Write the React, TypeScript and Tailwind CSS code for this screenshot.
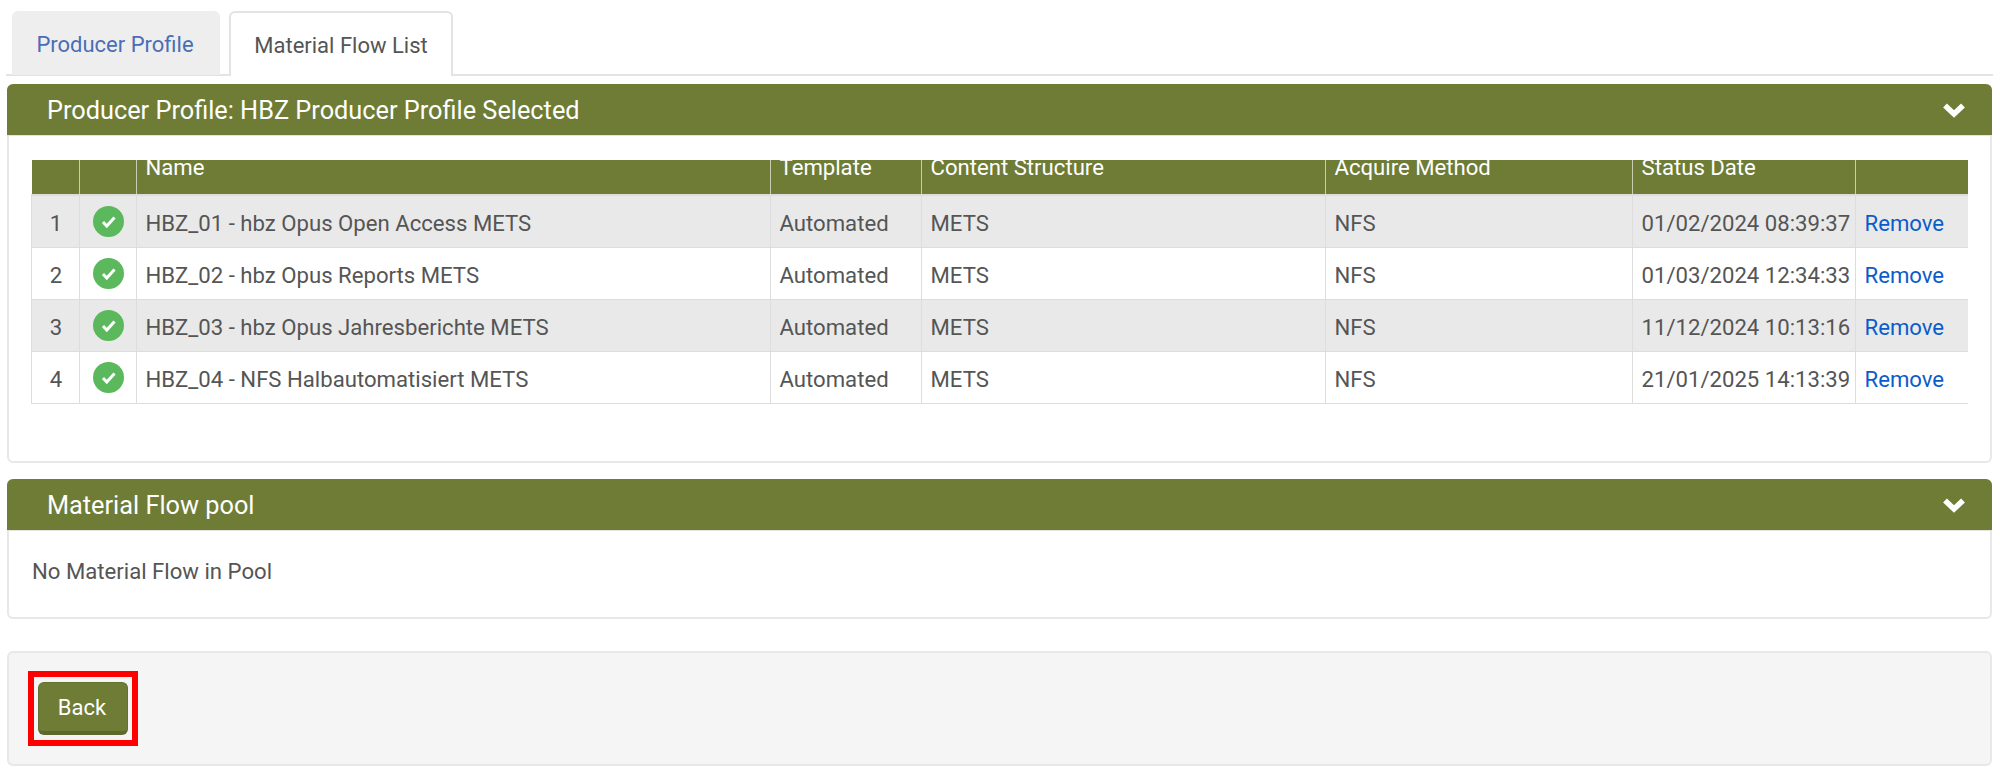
import React from "react";

const rows = [
  ["1", "HBZ_01 - hbz Opus Open Access METS", "01/02/2024 08:39:37"],
  ["2", "HBZ_02 - hbz Opus Reports METS", "01/03/2024 12:34:33"],
  ["3", "HBZ_03 - hbz Opus Jahresberichte METS", "11/12/2024 10:13:16"],
  ["4", "HBZ_04 - NFS Halbautomatisiert METS", "21/01/2025 14:13:39"],
];

const heads = ["", "", "Name", "Template", "Content Structure", "Acquire Method", "Status Date", ""];

function Chevron() {
  return (
    <svg width="24" height="17" viewBox="0 0 24 17" className="block">
      <path d="M3 4.5 L12 13 L21 4.5" fill="none" stroke="#ffffff" strokeWidth="5.5" strokeLinejoin="miter" />
    </svg>
  );
}

function Check() {
  return (
    <svg width="31" height="31" viewBox="0 0 31 31" className="block mx-auto">
      <circle cx="15.5" cy="15.5" r="15.5" fill="#5cb85c" />
      <path d="M10 16 L13.8 20 L21.5 11.5" fill="none" stroke="#ffffff" strokeWidth="3" />
    </svg>
  );
}

function PanelHeader({ title }: { title: string }) {
  return (
    <div className="h-[52px] bg-[#6e7c35] rounded-t-[6px] flex items-center justify-between pl-[40px] pr-[26px] text-white text-[25.3px] border-b border-[#e3e3e3]">
      <span className="pt-[3px]">{title}</span>
      <Chevron />
    </div>
  );
}

export default function App() {
  return (
    <div className="w-[2000px] h-[775px] bg-white text-[#555555] text-[22.15px] overflow-hidden font-['Roboto',sans-serif] px-[6px] pt-[11px]">
      <div className="flex h-[65px] border-b-2 border-[#e3e3e3] w-[1987px] pl-[6px] gap-[9px]">
        <div className="w-[208px] h-[64px] pr-[2px] pt-[3px] bg-[#eeeeee] rounded-t-[6px] flex items-center justify-center text-[#4a6eb5] text-[22px]">
          Producer Profile
        </div>
        <div className="w-[224px] h-[65px] pt-[2px] bg-white border-2 border-b-0 border-[#e3e3e3] rounded-t-[6px] flex items-center justify-center text-[22px] text-[#555555]">
          Material Flow List
        </div>
      </div>

      <div className="mt-[8px] ml-px w-[1985px] h-[379px] border-2 border-t-0 border-[#e8e8e8] rounded-[6px] bg-white">
        <div className="-mx-[2px]">
          <PanelHeader title="Producer Profile: HBZ Producer Profile Selected" />
        </div>
        <div className="pl-[22px] pt-[24px]">
          <table className="table-fixed border-collapse w-[1936px]">
            <colgroup>
              <col className="w-[48px]" />
              <col className="w-[57px]" />
              <col className="w-[634px]" />
              <col className="w-[151px]" />
              <col className="w-[404px]" />
              <col className="w-[307px]" />
              <col className="w-[223px]" />
              <col className="w-[112px]" />
            </colgroup>
            <thead>
              <tr className="bg-[#6e7c35] text-white h-[35px]">
                {heads.map((h, i) => (
                  <th key={i} className="p-0 font-normal text-left align-top border-l border-[#c9cdb0] first:border-l-0 border-b-2 border-b-[#dddddd]">
                    <div className="h-[33px] overflow-hidden pl-[8.5px]">
                      <div className="-mt-[5px] leading-[24px]">{h}</div>
                    </div>
                  </th>
                ))}
              </tr>
            </thead>
            <tbody>
              {rows.map((r, i) => {
                const bottom = i === 3 ? "border-b-[#dddddd] border-b-dotted" : "border-b-[#dddddd]";
                return (
                  <tr key={r[0]} className={i % 2 === 0 ? "bg-[#e9e9e9] h-[52px]" : "bg-white h-[52px]"}>
                    <td className={`p-0 pt-[5px] pl-[1px] text-center border-b border-l border-l-[#dddddd] ${bottom}`}>{r[0]}</td>
                    <td className={`p-0 border border-[#dddddd] ${bottom}`}><Check /></td>
                    <td className={`p-0 pt-[5px] pl-[8.5px] border border-[#dddddd] ${bottom}`}>{r[1]}</td>
                    <td className={`p-0 pt-[5px] pl-[8.5px] border border-[#dddddd] ${bottom}`}>Automated</td>
                    <td className={`p-0 pt-[5px] pl-[8.5px] border border-[#dddddd] ${bottom}`}>METS</td>
                    <td className={`p-0 pt-[5px] pl-[8.5px] border border-[#dddddd] ${bottom}`}>NFS</td>
                    <td className={`p-0 pt-[5px] pl-[8.5px] border border-[#dddddd] whitespace-nowrap ${bottom}`}>{r[2]}</td>
                    <td className={`p-0 pt-[5px] pl-[8.5px] border-b text-[#0b5ccb] ${bottom}`}>Remove</td>
                  </tr>
                );
              })}
            </tbody>
          </table>
        </div>
      </div>

      <div className="mt-[16px] ml-px w-[1985px] h-[140px] border-2 border-t-0 border-[#e8e8e8] rounded-[6px] bg-white">
        <div className="-mx-[2px]">
          <PanelHeader title="Material Flow pool" />
        </div>
        <div className="pl-[23px] pt-[28px] leading-[24px]">No Material Flow in Pool</div>
      </div>

      <div className="mt-[32px] ml-px w-[1985px] h-[115px] bg-[#f5f5f5] border-2 border-[#e8e8e8] rounded-[6px] pl-[19px] pt-[18px]">
        <div className="w-[110px] h-[75px] border-[6px] border-[#ff0000] flex items-center justify-center">
          <button className="w-[90px] h-[53px] pt-[1px] pr-[2px] bg-[#6e7c35] border border-[#64722f] border-b-[4px] border-b-[#5c6a2c] rounded-[6px] text-white text-[22px]">
            Back
          </button>
        </div>
      </div>
    </div>
  );
}
